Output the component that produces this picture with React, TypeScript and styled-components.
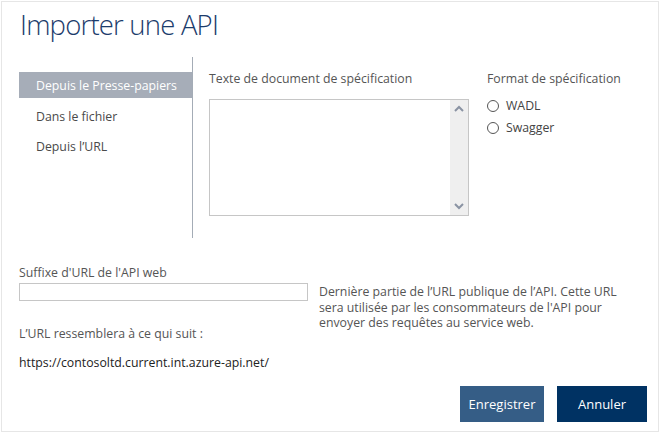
import styled, { createGlobalStyle } from "styled-components";

const GlobalStyle = createGlobalStyle`
  html, body {
    margin: 0;
    padding: 0;
    background: #ffffff;
  }
  body {
    font-family: "Open Sans", "Noto Sans", sans-serif;
  }
  * {
    box-sizing: border-box;
  }
`;

const Dialog = styled.div`
  margin: 1px;
  width: 658px;
  height: 431px;
  border: 1px solid #e6e6e6;
  padding: 0 11px 0 17px;
  display: flex;
  flex-direction: column;
`;

const Title = styled.h1`
  margin: 5px 0 0 1px;
  font-size: 27.5px;
  font-weight: 300;
  line-height: 36px;
  color: #1c3c6c;
  letter-spacing: -0.8px;
`;

const Top = styled.div`
  display: flex;
  margin-top: 14px;
  height: 181px;
`;

const Nav = styled.ul`
  list-style: none;
  margin: 0;
  padding: 15px 0 0 0;
  width: 174px;
  border-right: 1px solid #a4acb6;
`;

const NavItem = styled.li<{ $active?: boolean }>`
  height: ${(p) => (p.$active ? "26px" : "30px")};
  margin-bottom: ${(p) => (p.$active ? "3px" : "0")};
  padding-left: 17px;
  display: flex;
  align-items: center;
  font-size: 12.3px;
  color: ${(p) => (p.$active ? "#ffffff" : "#4a4a4a")};
  background: ${(p) => (p.$active ? "#a6adb8" : "transparent")};
`;

const SpecColumn = styled.div`
  margin-left: 16px;
  padding-top: 14px;
  width: 260px;
`;

const Label = styled.div`
  font-size: 12.3px;
  color: #555555;
  line-height: 16px;
`;

const TextBox = styled.div`
  margin-top: 12px;
  height: 117px;
  border: 1px solid #c6c6c6;
  display: flex;
  justify-content: flex-end;
`;

const ScrollBar = styled.div`
  width: 18px;
  background: #efefef;
  display: flex;
  flex-direction: column;
  justify-content: space-between;
  align-items: center;
  padding: 5px 0;
`;

const FormatColumn = styled.div`
  margin-left: 18px;
  padding-top: 14px;
`;

const RadioList = styled.div`
  margin-top: 11px;
  display: flex;
  flex-direction: column;
  gap: 6px;
`;

const RadioRow = styled.label`
  display: flex;
  align-items: center;
  gap: 7px;
  font-size: 12.3px;
  color: #444444;
  line-height: 16px;
`;

const RadioCircle = styled.span`
  width: 12px;
  height: 12px;
  border-radius: 50%;
  border: 1px solid #555555;
  background: #fff;
`;

const Bottom = styled.div`
  margin-top: 27px;
  display: flex;
  gap: 11px;
`;

const SuffixColumn = styled.div`
  width: 289px;
  display: flex;
  flex-direction: column;
`;

const Input = styled.input`
  margin-top: 2px;
  height: 18px;
  width: 289px;
  border: 1px solid #c6c6c6;
  padding: 0 4px;
  font-family: inherit;
  outline: none;
`;

const Hint = styled.div`
  margin-top: 25px;
  font-size: 12.3px;
  color: #555555;
  line-height: 16px;
`;

const UrlText = styled.div`
  margin-top: 13px;
  font-size: 12.3px;
  color: #222222;
  line-height: 16px;
`;

const Description = styled.div`
  margin-top: 19px;
  width: 320px;
  font-size: 12.3px;
  color: #555555;
  line-height: 15.7px;
`;

const Actions = styled.div`
  margin-top: auto;
  margin-bottom: 9px;
  display: flex;
  justify-content: flex-end;
  gap: 13px;
`;

const Button = styled.button<{ $primary?: boolean }>`
  height: 36px;
  width: ${(p) => (p.$primary ? "84px" : "90px")};
  border: none;
  font-family: inherit;
  font-size: 13px;
  color: #ffffff;
  background: ${(p) => (p.$primary ? "#355d86" : "#003263")};
  cursor: pointer;
`;

function Chevron({ up }: { up?: boolean }) {
  return (
    <svg width="10" height="7" viewBox="0 0 10 7">
      <path
        d={up ? "M1 6 L5 2 L9 6" : "M1 1 L5 5 L9 1"}
        fill="none"
        stroke="#8a93a3"
        strokeWidth="2"
      />
    </svg>
  );
}

export default function App() {
  return (
    <>
      <GlobalStyle />
      <Dialog>
        <Title>Importer une API</Title>
        <Top>
          <Nav>
            <NavItem $active>Depuis le Presse-papiers</NavItem>
            <NavItem>Dans le fichier</NavItem>
            <NavItem>Depuis l’URL</NavItem>
          </Nav>
          <SpecColumn>
            <Label>Texte de document de spécification</Label>
            <TextBox>
              <ScrollBar>
                <Chevron up />
                <Chevron />
              </ScrollBar>
            </TextBox>
          </SpecColumn>
          <FormatColumn>
            <Label>Format de spécification</Label>
            <RadioList>
              <RadioRow>
                <RadioCircle />
                WADL
              </RadioRow>
              <RadioRow>
                <RadioCircle />
                Swagger
              </RadioRow>
            </RadioList>
          </FormatColumn>
        </Top>
        <Bottom>
          <SuffixColumn>
            <Label>Suffixe d'URL de l'API web</Label>
            <Input />
            <Hint>L’URL ressemblera à ce qui suit :</Hint>
            <UrlText>https://contosoltd.current.int.azure-api.net/</UrlText>
          </SuffixColumn>
          <Description>
            Dernière partie de l’URL publique de l’API. Cette URL sera utilisée
            par les consommateurs de l'API pour envoyer des requêtes au service
            web.
          </Description>
        </Bottom>
        <Actions>
          <Button $primary>Enregistrer</Button>
          <Button>Annuler</Button>
        </Actions>
      </Dialog>
    </>
  );
}
